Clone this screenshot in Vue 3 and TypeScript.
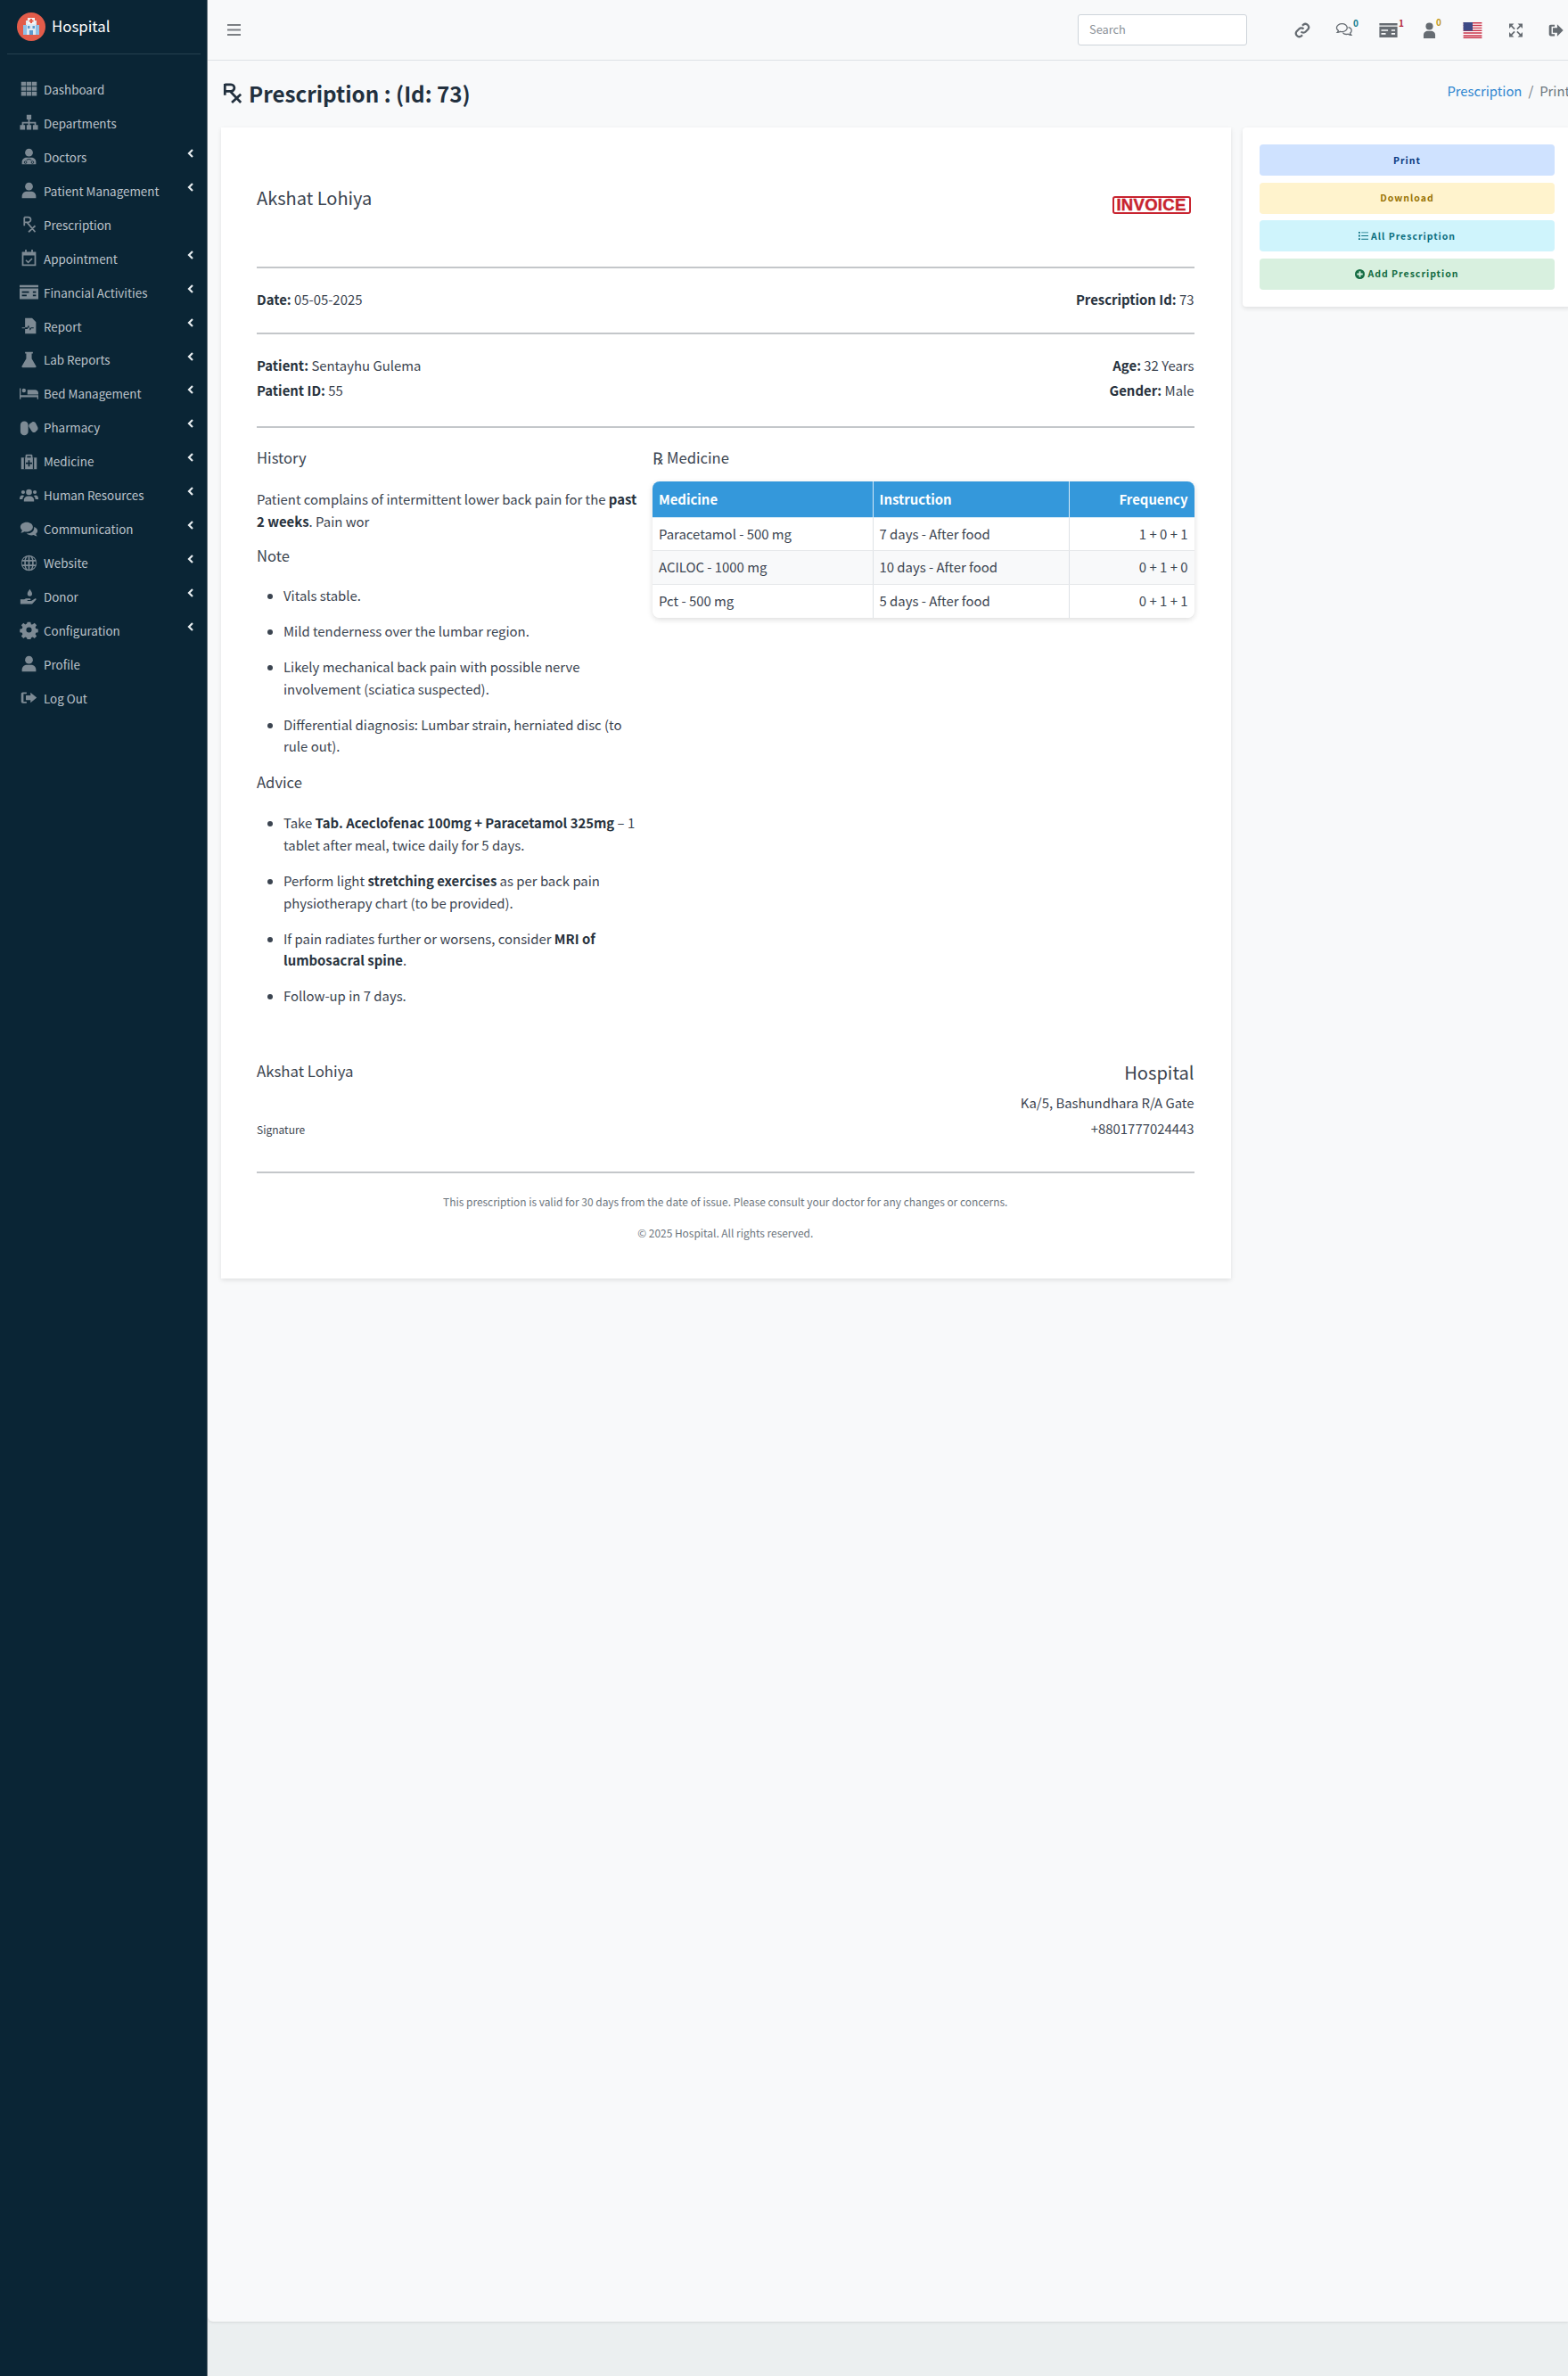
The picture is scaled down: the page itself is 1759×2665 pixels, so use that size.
<script setup lang="ts">
interface NavItem { label: string; icon: string; arrow: boolean }
const nav: NavItem[] = [
  { label: 'Dashboard', icon: 'grid', arrow: false },
  { label: 'Departments', icon: 'sitemap', arrow: false },
  { label: 'Doctors', icon: 'doctor', arrow: true },
  { label: 'Patient Management', icon: 'user', arrow: true },
  { label: 'Prescription', icon: 'rx', arrow: false },
  { label: 'Appointment', icon: 'calendar', arrow: true },
  { label: 'Financial Activities', icon: 'card', arrow: true },
  { label: 'Report', icon: 'report', arrow: true },
  { label: 'Lab Reports', icon: 'flask', arrow: true },
  { label: 'Bed Management', icon: 'bed', arrow: true },
  { label: 'Pharmacy', icon: 'pills', arrow: true },
  { label: 'Medicine', icon: 'medkit', arrow: true },
  { label: 'Human Resources', icon: 'users', arrow: true },
  { label: 'Communication', icon: 'comments', arrow: true },
  { label: 'Website', icon: 'globe', arrow: true },
  { label: 'Donor', icon: 'donor', arrow: true },
  { label: 'Configuration', icon: 'cog', arrow: true },
  { label: 'Profile', icon: 'user', arrow: false },
  { label: 'Log Out', icon: 'logout', arrow: false },
]
const rows = [
  ['Paracetamol - 500 mg', '7 days - After food', '1 + 0 + 1'],
  ['ACILOC - 1000 mg', '10 days - After food', '0 + 1 + 0'],
  ['Pct - 500 mg', '5 days - After food', '0 + 1 + 1'],
]
</script>

<template>
  <div class="layout">
    <aside class="sidebar">
      <div class="brand">
        <svg class="logo" viewBox="0 0 32 32">
          <circle cx="16" cy="16" r="16" fill="#e25c4a" />
          <rect x="10" y="9" width="12" height="16" fill="#dfe9f2" />
          <rect x="7" y="14" width="4" height="11" fill="#8fc0e6" />
          <rect x="21" y="14" width="4" height="11" fill="#8fc0e6" />
          <rect x="12" y="6" width="8" height="7" fill="#f4f6f8" />
          <rect x="15" y="7" width="2" height="5" fill="#e25c4a" />
          <rect x="13.5" y="8.5" width="5" height="2" fill="#e25c4a" />
          <rect x="12" y="15" width="2.500" height="3" fill="#5a9bd0" />
          <rect x="17.500" y="15" width="2.500" height="3" fill="#5a9bd0" />
          <rect x="14" y="20" width="4" height="5" fill="#5a9bd0" />
        </svg>
        <span class="brand-name">Hospital</span>
      </div>
      <nav class="menu">
        <a v-for="item in nav" :key="item.label" class="menu-item">
          <span class="menu-icon">
            <svg viewBox="0 0 24 24" fill="#7d8a94">
              <template v-if="item.icon === 'grid'">
                <path d="M2 3h6.200v5.400H2zM9 3h6.200v5.400H9zM16 3h6v5.400h-6zM2 9.300h6.200v5.400H2zM9 9.300h6.200v5.400H9zM16 9.300h6v5.400h-6zM2 15.600h6.200V21H2zM9 15.600h6.200V21H9zM16 15.600h6V21h-6z" />
              </template>
              <template v-else-if="item.icon === 'sitemap'">
                <path d="M9 2h6v6h-2v3h8v4h2.500v6h-6.500v-6h2v-2h-6v2h2v6H9v-6h2v-2H5v2h2v6H.500v-6H3v-4h8V8H9z" />
              </template>
              <template v-else-if="item.icon === 'doctor'">
                <circle cx="12" cy="7" r="5" />
                <path d="M3 22v-3c0-3.500 3-5.500 6-5.500h6c3 0 6 2 6 5.500v3z" />
                <path d="M6 19.500a1.500 1.500 0 1 0 3 0 1.500 1.500 0 1 0-3 0M15 19.500a1.500 1.500 0 1 0 3 0 1.500 1.500 0 1 0-3 0M9 17c0-2 6-2 6 0" stroke="#0a2333" stroke-width="1" fill="none" />
              </template>
              <template v-else-if="item.icon === 'user'">
                <circle cx="12" cy="7" r="5" />
                <path d="M3 22v-2.500C3 16 6 13.500 9 13.500h6c3 0 6 2.500 6 6V22z" />
              </template>
              <template v-else-if="item.icon === 'rx'">
                <path d="M6 3v11M6 3h5a3 3 0 0 1 0 6.500H6M9.500 9.500 20 22M20 14l-8.500 8" fill="none" stroke="#7d8a94" stroke-width="2" />
              </template>
              <template v-else-if="item.icon === 'calendar'">
                <path d="M7 1h2v3h6V1h2v3h4v18H3V4h4zM5 8.500V20h14V8.500z" />
                <path d="m8 14.500 3 3 5-5" fill="none" stroke="#7d8a94" stroke-width="1.800" />
              </template>
              <template v-else-if="item.icon === 'card'">
                <path d="M0 3h24v3H0zM0 7.500h24V21H0z" />
                <path d="M3 11h9v2H3zM3 15.500h6v2H3zM17 11h4v2h-4zM17 15.500h4v2h-4z" fill="#0a2333" />
              </template>
              <template v-else-if="item.icon === 'report'">
                <path d="M7 2h9l5 5v15H7v-6h3l1.500-3 2 5 1.500-3h3v-1h-3.500l-1 2-2-5-1.800 3H7zM3 14h4v1H3z" />
              </template>
              <template v-else-if="item.icon === 'flask'">
                <path d="M7 2h10v2h-1.500v6.500L21 20c.7 1.200 0 2-1 2H4c-1 0-1.700-.8-1-2l5.500-9.500V4H7z" />
              </template>
              <template v-else-if="item.icon === 'bed'">
                <path d="M0 5h1.500v9H24v5h-1.500v-2.500h-21V19H0zM3 8a2.500 2.500 0 1 1 5 0 2.500 2.500 0 0 1-5 0M10 7h10c2 0 4 1.500 4 4v2H10z" />
              </template>
              <template v-else-if="item.icon === 'pills'">
                <path d="M6 4c3 0 5 2 5 5v8a5 5 0 0 1-10 0V9c0-3 2-5 5-5z" />
                <path d="m13 7 3-2c2-1 4 0 5 2l2 4c1 2 .5 4-1 5l-2 2c-2 1-4 0-5-2l-3-5c-.5-2 0-3 1-4z" />
              </template>
              <template v-else-if="item.icon === 'medkit'">
                <path d="M9 3h6c.800 0 1.500.700 1.500 1.500V7H22v15H2V7h5.500V4.500C7.500 3.700 8.200 3 9 3zm.500 2v2h5V5z" fill-rule="evenodd" />
                <path d="M5.500 7H7v15H5.500zM17 7h1.500v15H17z" fill="#0a2333" />
                <path d="M11 10.500h2v3h3v2h-3v3h-2v-3H8v-2h3z" fill="#0a2333" />
              </template>
              <template v-else-if="item.icon === 'users'">
                <circle cx="12" cy="8" r="3.800" />
                <circle cx="4.500" cy="8" r="2.400" />
                <circle cx="19.500" cy="8" r="2.400" />
                <path d="M5.500 20v-2c0-3 2.500-5 5-5h3c2.500 0 5 2 5 5v2zM0 16c0-2 1.500-4 3.500-4 1 0 1.800.3 2.500.8C4.500 14 3.800 15.500 3.800 17H0zM24 16c0-2-1.500-4-3.500-4-1 0-1.800.3-2.500.8 1.500 1.200 2.200 2.700 2.200 4.200H24z" />
              </template>
              <template v-else-if="item.icon === 'comments'">
                <path d="M9 3c4.500 0 8 2.700 8 6.200S13.500 15.500 9 15.500c-1 0-2-.2-3-.5-1.200.8-2.700 1.500-4.500 1.500 1-.9 1.600-2 1.800-3C1.800 12.400 1 10.900 1 9.200 1 5.700 4.500 3 9 3z" />
                <path d="M18.500 9c2.600.7 4.500 2.800 4.500 5 0 1.600-.8 3-2.200 4 .2 1 .8 2.100 1.700 3-1.800 0-3.200-.7-4.400-1.500-1 .3-1.800.4-2.800.4-2.600 0-4.900-1-6.200-2.500 5.500.3 10-2.500 9.400-8.400z" />
              </template>
              <template v-else-if="item.icon === 'globe'">
                <path fill-rule="evenodd" d="M12 2a10 10 0 1 0 0 20 10 10 0 0 0 0-20zm-1 1.300V8H8c.5-2.400 1.700-4.200 3-4.700zm2 0c1.300.5 2.500 2.300 3 4.700h-3zM4 8a9 9 0 0 1 3.500-3.500C7 5.500 6.500 6.700 6.300 8zm13.700 0c-.2-1.300-.7-2.500-1.200-3.500A9 9 0 0 1 20 8zM3 12c0-.7.100-1.300.2-2h2.900c-.1 1.300-.1 2.700 0 4H3.200c-.1-.7-.2-1.300-.2-2zm5-2h3v4H8c-.1-1.300-.1-2.700 0-4zm5 0h3c.1 1.300.1 2.700 0 4h-3zm4.900 0h2.900c.3 1.300.3 2.700 0 4h-2.900c.1-1.300.1-2.700 0-4zM4 16h2.300c.2 1.300.7 2.500 1.200 3.500A9 9 0 0 1 4 16zm4 0h3v4.700c-1.300-.5-2.500-2.300-3-4.700zm5 0h3c-.5 2.400-1.700 4.200-3 4.700zm4.700 0H20a9 9 0 0 1-3.500 3.500c.5-1 1-2.200 1.200-3.500z" />
              </template>
              <template v-else-if="item.icon === 'donor'">
                <path d="M13 2c1.500 2.500 3 4 3 6a3 3 0 0 1-6 0c0-2 1.500-3.500 3-6zM1 15h5l2-1h5c1 0 1.500 1 1 2h-4v1h5l5-3c1-.5 2 .8 1 1.700L16 21H1z" />
              </template>
              <template v-else-if="item.icon === 'cog'">
                <path fill-rule="evenodd" d="m10 2 4 0 .8 3 2-.1 2.300-1.700 2.800 2.800-1.700 2.300.5 1.900 3 .8v4l-3 .8-.5 1.900 1.700 2.300-2.800 2.800-2.300-1.700-2 .9-.8 3h-4l-.8-3-2-.9-2.300 1.700-2.800-2.800 1.700-2.300-.5-1.900-3-.8v-4l3-.8.5-1.900-1.700-2.300 2.800-2.800L7.200 5l2-1zM12 8.500a3.500 3.500 0 1 0 0 7 3.500 3.500 0 0 0 0-7z" />
              </template>
              <template v-else-if="item.icon === 'logout'">
                <path d="M4 5h5v2H5v10h4v2H4c-1 0-2-1-2-2V7c0-1 1-2 2-2z" />
                <path d="M14 5.500 22 12l-8 6.500V15H8V9h6z" />
              </template>
            </svg>
          </span>
          <span class="menu-label">{{ item.label }}</span>
          <svg v-if="item.arrow" class="caret" viewBox="0 0 8 10"><path d="M6 1 2 5l4 4" fill="none" stroke="#e8edf0" stroke-width="2.200" /></svg>
        </a>
      </nav>
    </aside>

    <div class="main">
      <div class="page">
        <header class="topbar">
          <svg class="burger" viewBox="0 0 15 13"><path d="M0 1h15M0 6.500h15M0 12h15" stroke="#7b7f83" stroke-width="1.800" /></svg>
          <div class="top-right">
            <div class="search">Search</div>
            <svg class="ti link" viewBox="0 0 24 24"><path d="M10 14a5 5 0 0 0 7 0l3.500-3.500a5 5 0 0 0-7-7L12 5M14 10a5 5 0 0 0-7 0l-3.500 3.500a5 5 0 0 0 7 7L12 19" fill="none" stroke="#666c72" stroke-width="3" /></svg>
            <span class="ti-wrap msg">
              <svg class="ti" viewBox="0 0 24 22"><path d="M9 2c4 0 7 2.500 7 5.500S13 13 9 13c-.9 0-1.800-.1-2.600-.4C5.400 13.400 4 14 2.500 14c.8-.8 1.300-1.700 1.400-2.600C2.600 10.400 1.500 9 1.500 7.500 1.500 4.500 5 2 9 2zM17.500 7c2.600.5 4.500 2.300 4.500 4.400 0 1.400-.8 2.700-2 3.500.1.900.6 1.800 1.400 2.600-1.500 0-2.900-.6-3.900-1.400-2.700.8-6 0-7.500-2" fill="none" stroke="#666c72" stroke-width="1.600" /></svg>
              <sup class="count teal">0</sup>
            </span>
            <span class="ti-wrap cardi">
              <svg class="ti" viewBox="0 0 24 19"><path d="M0 0h24v3H0zM0 4.500h24V19H0z" fill="#666c72" /><path d="M2.500 8.500h9v2h-9zM2.500 13h6v2h-6zM16 8.500h5v2h-5zM16 13h5v2h-5z" fill="#f8f9fa" /></svg>
              <sup class="count red">1</sup>
            </span>
            <span class="ti-wrap useri">
              <svg class="ti" viewBox="0 0 18 22"><circle cx="9" cy="5.500" r="5" fill="#666c72" /><path d="M1 22v-4.500C1 14 4 12 6.500 12h5c2.500 0 5.500 2 5.500 5.500V22z" fill="#666c72" /></svg>
              <sup class="count amber">0</sup>
            </span>
            <svg class="flag" viewBox="0 0 22 19">
              <rect width="22" height="19" fill="#fff" />
              <path d="M0 0h22v1.500H0zM0 3h22v1.500H0zM0 6h22v1.500H0zM0 9h22v1.500H0zM0 12h22v1.500H0zM0 15h22v1.500H0zM0 17.500h22V19H0z" fill="#c9344a" />
              <rect width="11" height="10" fill="#3d4a86" />
            </svg>
            <svg class="ti expand" viewBox="0 0 16 16"><path d="M0 0h5.800L0 5.800zM16 0v5.800L10.200 0zM0 16v-5.800L5.800 16zM16 16h-5.800l5.800-5.800z" fill="#666c72" /><path d="M2.500 2.500 6.500 6.500M13.500 2.500 9.500 6.500M2.500 13.500l4-4M13.500 13.500l-4-4" stroke="#666c72" stroke-width="1.800" /></svg>
            <svg class="ti out" viewBox="0 0 24 22"><path d="M4 2h6v3H5v12h5v3H4c-2 0-3-1-3-3V5c0-2 1-3 3-3z" fill="#666c72" /><path d="M14 1.500 23.500 11 14 20.500V15H7V7h7z" fill="#666c72" /></svg>
          </div>
        </header>

        <div class="page-head">
          <h1 class="page-title">
            <svg class="rx-title" viewBox="0 0 24 26"><path d="M2.500 2v14M2.500 3H10a4 4 0 0 1 0 8.200H2.500M9 11.200 22 25M22 15 11 25" fill="none" stroke="#22303e" stroke-width="3" /></svg>
            Prescription : (Id: 73)
          </h1>
          <div class="crumbs"><span class="crumb-link">Prescription</span><span class="crumb-sep">/</span><span class="crumb-cur">Print</span></div>
        </div>

        <div class="content">
          <section class="card invoice">
            <div class="inv-head">
              <div class="doc-name">Akshat Lohiya</div>
              <div class="stamp">INVOICE</div>
            </div>
            <hr class="rule" />
            <div class="two-col date-row">
              <div><b>Date:</b> 05-05-2025</div>
              <div><b>Prescription Id:</b> 73</div>
            </div>
            <hr class="rule" />
            <div class="two-col pat-row">
              <div>
                <div><b>Patient:</b> Sentayhu Gulema</div>
                <div><b>Patient ID:</b> 55</div>
              </div>
              <div class="right">
                <div><b>Age:</b> 32 Years</div>
                <div><b>Gender:</b> Male</div>
              </div>
            </div>
            <hr class="rule" />
            <div class="body-cols">
              <div class="notes">
                <h5 class="sec first-sec">History</h5>
                <p class="para">Patient complains of intermittent lower back pain for the <b>past 2 weeks</b>. Pain wor</p>
                <h5 class="sec note-sec">Note</h5>
                <ul>
                  <li>Vitals stable.</li>
                  <li>Mild tenderness over the lumbar region.</li>
                  <li>Likely mechanical back pain with possible nerve involvement (sciatica suspected).</li>
                  <li>Differential diagnosis: Lumbar strain, herniated disc (to rule out).</li>
                </ul>
                <h5 class="sec">Advice</h5>
                <ul class="advice">
                  <li>Take <b>Tab. Aceclofenac 100mg + Paracetamol 325mg</b> – 1 tablet after meal, twice daily for 5 days.</li>
                  <li>Perform light <b>stretching exercises</b> as per back pain physiotherapy chart (to be provided).</li>
                  <li>If pain radiates further or worsens, consider <b>MRI of lumbosacral spine</b>.</li>
                  <li>Follow-up in 7 days.</li>
                </ul>
              </div>
              <div class="meds">
                <h5 class="sec first-sec"><span class="rx-glyph">℞</span>Medicine</h5>
                <div class="table-wrap">
                  <table>
                    <thead>
                      <tr><th class="c1">Medicine</th><th class="c2">Instruction</th><th class="c3">Frequency</th></tr>
                    </thead>
                    <tbody>
                      <tr v-for="r in rows" :key="r[0]"><td>{{ r[0] }}</td><td>{{ r[1] }}</td><td class="c3">{{ r[2] }}</td></tr>
                    </tbody>
                  </table>
                </div>
              </div>
            </div>
            <div class="sign">
              <div class="sign-left">
                <div class="sign-name">Akshat Lohiya</div>
                <small>Signature</small>
              </div>
              <div class="sign-right">
                <div class="hosp">Hospital</div>
                <div>Ka/5, Bashundhara R/A Gate</div>
                <div>+8801777024443</div>
              </div>
            </div>
            <hr class="rule" />
            <div class="foot-text">
              <p>This prescription is valid for 30 days from the date of issue. Please consult your doctor for any changes or concerns.</p>
              <p>© 2025 Hospital. All rights reserved.</p>
            </div>
          </section>

          <aside class="card actions">
            <button class="btn b-blue">Print</button>
            <button class="btn b-yellow">Download</button>
            <button class="btn b-cyan">
              <svg class="bi" viewBox="0 0 12 12"><path d="M0 1h2v2H0zM0 5h2v2H0zM0 9h2v2H0zM3.500 1.500H12v1H3.500zM3.500 5.500H12v1H3.500zM3.500 9.500H12v1H3.500z" fill="#0b6f80" /></svg>All Prescription
            </button>
            <button class="btn b-green">
              <svg class="bi" viewBox="0 0 12 12"><circle cx="6" cy="6" r="6" fill="#146c43" /><path d="M5 2.500h2V5h2.500v2H7v2.500H5V7H2.500V5H5z" fill="#d8f0df" /></svg>Add Prescription
            </button>
          </aside>
        </div>
      </div>
      <footer class="page-foot"></footer>
    </div>
  </div>
</template>

<style>
html, body { margin: 0; padding: 0; overflow: hidden; }
</style>

<style scoped>
.layout {
  display: flex;
  width: 1759px;
  height: 2665px;
  overflow: hidden;
  background: #ebeff0;
  font-family: "Noto Sans CJK SC", "Source Sans Pro", "Open Sans", sans-serif;
  font-size: 14.9px;
  line-height: 24px;
  color: #3b4450;
}
b { color: #27323d; font-weight: 700; }
.sidebar {
  width: 233px;
  flex: none;
  background: #0a2535;
  box-sizing: border-box;
  border-right: 1px solid #66737c;
}
.brand {
  margin: 0 7px 0 8px;
  height: 61px;
  box-sizing: border-box;
  display: flex;
  align-items: center;
  padding: 0 11px;
  border-bottom: 1px solid #26404f;
}
.logo { width: 32px; height: 32px; flex: none; margin-top: -1px; }
.brand-name { margin-left: 7px; font-size: 16.8px; color: #fff; line-height: 24px; margin-top: -2px; }
.menu { display: flex; flex-direction: column; padding-top: 20px; }
.menu-item {
  height: 37.940px;
  flex: none;
  display: flex;
  align-items: center;
  padding: 0 16px 0 21px;
  position: relative;
  color: #bcc3cb;
  font-size: 13.4px;
}
.menu-icon { width: 22px; height: 22px; display: flex; align-items: center; justify-content: center; flex: none; }
.menu-icon svg { width: 21px; height: 21px; }
.menu-label { margin-left: 6px; white-space: nowrap; }
.caret { position: absolute; left: 210px; top: 10px; width: 8px; height: 10px; }

.main { flex: 1; min-width: 0; display: flex; flex-direction: column; overflow: hidden; }
.page {
  height: 2604px;
  flex: none;
  background: #f8f9fa;
  border-bottom-left-radius: 6px;
  box-shadow: 0 1px 3px rgba(0, 0, 0, 0.1);
  display: flex;
  flex-direction: column;
}
.topbar {
  height: 68px;
  flex: none;
  box-sizing: border-box;
  border-bottom: 1px solid #dee2e6;
  display: flex;
  align-items: center;
  justify-content: space-between;
  padding: 0 5px 0 22px;
}
.burger { width: 15px; height: 13px; }
.top-right { display: flex; align-items: center; }
.search {
  width: 190px;
  height: 35px;
  box-sizing: border-box;
  border: 1px solid #ced4da;
  border-radius: 3px;
  background: #fff;
  color: #8a9096;
  font-size: 12.8px;
  line-height: 31px;
  padding-left: 12px;
}
.ti { display: block; width: 100%; height: 100%; }
.ti-wrap { position: relative; display: block; }
.link { width: 18px; height: 18px; margin-left: 53px; flex: none; }
.msg { width: 20px; height: 18px; margin-left: 28px; margin-right: 4px; }
.cardi { width: 21px; height: 16px; margin-left: 25px; margin-right: 4px; }
.useri { width: 15px; height: 18px; margin-left: 24px; margin-right: 6px; }
.flag { width: 22px; height: 18px; margin-left: 24px; display: block; flex: none; }
.expand { width: 15px; height: 16px; margin-left: 30px; flex: none; }
.out { width: 17px; height: 16px; margin-left: 29px; flex: none; }
.count { position: absolute; font-size: 10px; line-height: 12px; left: 20px; top: -5px; font-weight: 700; vertical-align: baseline; }
.cardi .count { left: 22px; top: -6px; }
.useri .count { left: 15px; top: -6px; }
.teal { color: #17808f; }
.red { color: #b3273a; }
.amber { color: #c49a1c; }

.page-head {
  height: 75px;
  width: 1528px;
  flex: none;
  display: flex;
  align-items: flex-start;
  justify-content: space-between;
  box-sizing: border-box;
  padding: 22px 0 0 17px;
}
.page-title {
  margin: 0;
  font-size: 24.2px;
  line-height: 30px;
  font-weight: 700;
  color: #22303e;
  display: flex;
  align-items: center;
  gap: 7px;
  white-space: nowrap;
}
.rx-title { width: 22px; height: 24px; margin-top: -3px; flex: none; }
.crumbs { font-size: 14.800px; line-height: 24px; white-space: nowrap; margin-top: -0.500px; }
.crumb-link { color: #2e86d0; }
.crumb-sep { color: #6c757d; margin: 0 7px; }
.crumb-cur { color: #6c757d; }

.content { display: flex; align-items: flex-start; padding-left: 15px; flex: none; }
.card { background: #fff; box-shadow: 0 2px 5px rgba(0, 0, 0, 0.1); box-sizing: border-box; }
.invoice { width: 1133px; height: 1291px; padding: 0 41.500px 0 40px; flex: none; display: flex; flex-direction: column; }
.actions { width: 369px; height: 201px; flex: none; margin-left: 13px; padding: 19px 19px 0; border-radius: 4px; display: flex; flex-direction: column; gap: 7.670px; }

.inv-head { display: flex; justify-content: space-between; height: 156px; flex: none; }
.doc-name { font-size: 20px; line-height: 28px; margin-top: 64.500px; color: #3b4450; }
.stamp {
  margin-top: 77px;
  width: 88px;
  height: 20px;
  box-sizing: border-box;
  border: 2px solid #c8232f;
  border-radius: 3px;
  color: #c8232f;
  font-family: "Liberation Sans", sans-serif;
  font-weight: 700;
  font-size: 18.500px;
  line-height: 16px;
  letter-spacing: 0.3px;
  -webkit-text-stroke: 0.4px #c8232f;
  text-align: center;
  margin-right: 4px;
  flex: none;
}
.rule { border: 0; height: 2px; background: #c4c7ca; margin: 0; flex: none; }
.two-col { display: flex; justify-content: space-between; flex: none; }
.right { text-align: right; }
.date-row { height: 72px; box-sizing: border-box; padding-bottom: 3px; align-items: center; }
.pat-row { height: 103px; align-items: flex-start; box-sizing: border-box; padding-top: 20.500px; line-height: 28.500px; }
.body-cols { display: flex; flex: none; height: 706px; }
.notes { width: 444px; box-sizing: border-box; padding-right: 12px; flex: none; }
.meds { flex: 1; min-width: 0; }
.sec { font-size: 16.600px; font-weight: 400; line-height: 24px; margin: 0; color: #3b4450; }
.first-sec { margin-top: 20.500px; }
.para { margin: 22.200px 0 0; line-height: 25px; }
.note-sec { margin-top: 14.200px; }
ul { margin: 21.200px 0 0; padding-left: 30px; }
.advice { margin-top: 22.200px; }
li { margin-bottom: 15.400px; line-height: 24.600px; }
.rx-glyph { font-family: "DejaVu Serif", "Liberation Serif", serif; font-size: 19px; line-height: 0; display: inline-block; width: 16px; vertical-align: -1px; }
.table-wrap {
  margin-top: 15.500px;
  border-radius: 8px;
  overflow: hidden;
  box-shadow: 0 2px 6px rgba(0, 0, 0, 0.14);
}
table { width: 100%; border-collapse: collapse; table-layout: fixed; }
th { background: #3498db; color: #fff; font-weight: 700; text-align: left; height: 40px; padding: 0 7px; border-right: 1px solid #d5e9f7; box-sizing: border-box; border-bottom: 1px solid #d5e9f7; }
td { height: 37.500px; padding: 0 7px; border-right: 1px solid #dee2e6; border-bottom: 1px solid #e6e8ea; box-sizing: border-box; background: #fff; }
tbody tr:nth-child(2) td { background: #f8f9fa; }
tbody tr:last-child td { border-bottom: 0; }
th:last-child, td:last-child { border-right: 0; }
.c1 { width: 247px; }
.c2 { width: 220px; }
.c3 { text-align: right; }

.sign { display: flex; justify-content: space-between; height: 128px; flex: none; }
.sign-left { display: flex; flex-direction: column; }
.sign-name { font-size: 16.800px; line-height: 24px; margin-top: 3px; }
small { font-size: 12px; line-height: 16px; margin-top: 46px; }
.sign-right { text-align: right; line-height: 29px; }
.hosp { font-size: 20.100px; line-height: 32px; margin-top: 0.500px; margin-bottom: 3.500px; }
.foot-text { text-align: center; color: #6c757d; font-size: 11.930px; line-height: 16px; padding-top: 23.500px; }
.foot-text p { margin: 0 0 19px; }

.btn {
  height: 35px;
  flex: none;
  border: 0;
  border-radius: 4px;
  font-family: inherit;
  font-size: 10.500px;
  font-weight: 700;
  letter-spacing: 1px;
  display: flex;
  align-items: center;
  justify-content: center;
  padding: 0;
  line-height: 16px;
}
.bi { width: 11px; height: 11px; margin-right: 3px; }
.b-blue { background: #cfe2ff; color: #0a3a7f; }
.b-yellow { background: #fff3cd; color: #997404; }
.b-cyan { background: #cff4fc; color: #0b6f80; }
.b-green { background: #d8f0df; color: #146c43; }

.page-foot { flex: 1; }
</style>
